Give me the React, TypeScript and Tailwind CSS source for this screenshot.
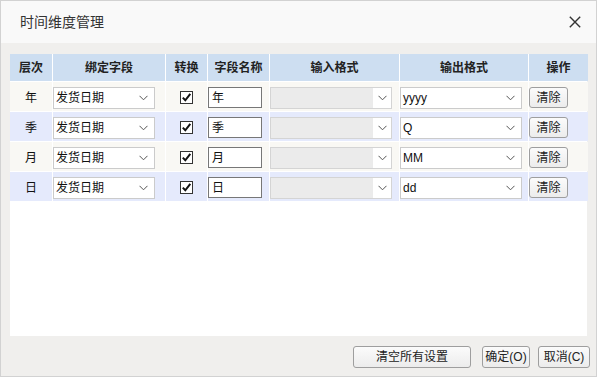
const rows = [
  { level: '年', name: '年', out: 'yyyy' },
  { level: '季', name: '季', out: 'Q' },
  { level: '月', name: '月', out: 'MM' },
  { level: '日', name: '日', out: 'dd' },
]

const font = { fontFamily: '"Liberation Sans", "Noto Sans CJK SC", sans-serif' }

function Chevron() {
  return (
    <svg width="9" height="6" viewBox="0 0 9 6" className="shrink-0">
      <path d="M0.5 0.8 L4.5 4.8 L8.5 0.8" fill="none" stroke="#555" strokeWidth="1" />
    </svg>
  )
}

function Select({ value, className = '' }: { value: string; className?: string }) {
  return (
    <div className={`flex h-[22px] items-center justify-between border border-[#cbcbcb] bg-white pl-[2px] pr-[6px] text-[12px] text-[#111] ${className}`}>
      <span>{value}</span>
      <Chevron />
    </div>
  )
}

function DisabledSelect() {
  return (
    <div className="flex h-[22px] w-[122px] items-stretch border border-[#d4d4d4] bg-[#ebebeb]">
      <div className="flex-1" />
      <div className="flex w-[18px] items-center justify-center bg-white">
        <Chevron />
      </div>
    </div>
  )
}

function Checkbox() {
  return (
    <div className="flex h-[13px] w-[13px] items-center justify-center border border-[#333] bg-white">
      <svg width="11" height="11" viewBox="0 0 11 11">
        <path d="M1.8 5.6 L4.3 8.3 L9.3 1.8" fill="none" stroke="#111" strokeWidth="2" />
      </svg>
    </div>
  )
}

function Button({ children, className = '' }: { children: React.ReactNode; className?: string }) {
  return (
    <div className={`flex items-center justify-center rounded-[3px] border border-[#9e9e9e] bg-gradient-to-b from-[#fbfbfb] to-[#ececec] text-[12px] text-[#222] ${className}`}>
      {children}
    </div>
  )
}

const cols = 'grid grid-cols-[42px_112px_41px_61px_129px_128px_59px] gap-x-px'

export default function App() {
  return (
    <div className="flex h-[377px] w-[597px] flex-col border border-[#d2d2d2] bg-[#f0efed]" style={font}>
      <div className="flex h-[42px] shrink-0 items-center justify-between bg-[#f9f9f9] pl-[19px] pr-[15px]">
        <span className="text-[14px] text-[#333]">时间维度管理</span>
        <svg width="12" height="12" viewBox="0 0 12 12">
          <path d="M0.8 0.8 L11.2 11.2 M11.2 0.8 L0.8 11.2" stroke="#333" strokeWidth="1.4" />
        </svg>
      </div>

      <div className="mx-[9px] mt-[11px] flex h-[282px] flex-col gap-y-px bg-white">
        <div className={`${cols} h-[27px] text-[12px] font-bold text-[#222]`}>
          {['层次', '绑定字段', '转换', '字段名称', '输入格式', '输出格式', '操作'].map((h) => (
            <div key={h} className="flex items-center justify-center bg-[#cddef1]">
              {h}
            </div>
          ))}
        </div>

        {rows.map((r, i) => (
          <div key={r.level} className={`${cols} h-[29px] text-[12px] text-[#111]`}>
            {[
              <span>{r.level}</span>,
              <Select value="发货日期" className="w-[102px]" />,
              <Checkbox />,
              <div className="flex h-[21px] w-[54px] items-center border border-[#777] bg-white pl-[3px]">{r.name}</div>,
              <DisabledSelect />,
              <Select value={r.out} className="w-[122px]" />,
              <Button className="h-[21px] w-[39px]">清除</Button>,
            ].map((c, j) => (
              <div
                key={j}
                className={`flex items-center pt-[2px] ${j === 0 || j === 2 ? 'justify-center' : ''} ${i % 2 === 0 ? 'bg-[#f9f8f4]' : 'bg-[#e5eafc]'}`}
              >
                {c}
              </div>
            ))}
          </div>
        ))}
      </div>

      <div className="flex flex-1 items-center justify-end gap-[8px] pr-[6px] pt-[1px]">
        <Button className="mr-[3px] h-[22px] w-[118px]">清空所有设置</Button>
        <Button className="h-[22px] w-[48px]">确定(O)</Button>
        <Button className="h-[22px] w-[52px]">取消(C)</Button>
      </div>
    </div>
  )
}
